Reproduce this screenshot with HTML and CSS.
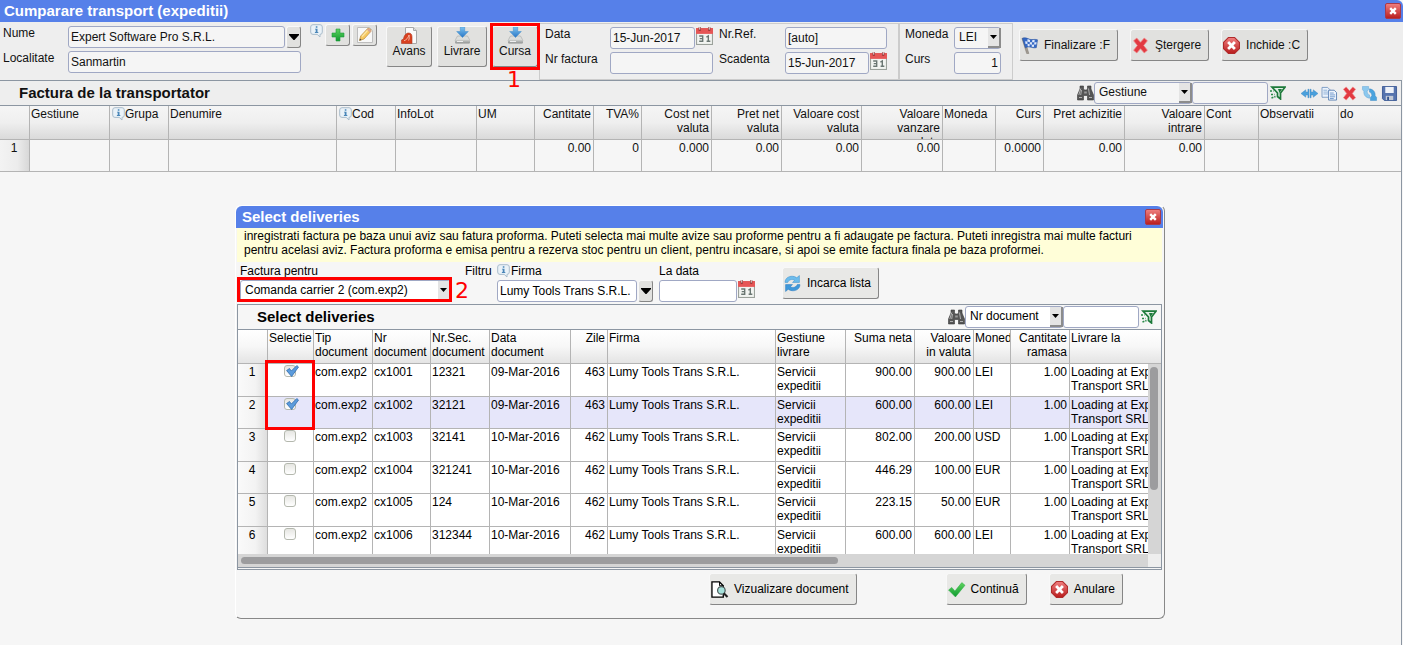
FILE: index.html
```html
<!DOCTYPE html>
<html lang="ro">
<head>
  <meta charset="UTF-8">
  <title>Cumparare transport (expeditii)</title>
  <link rel="stylesheet" href="styles.css">
</head>
<body>
  <!-- icons -->
  <svg class="sprite" aria-hidden="true">
    <defs>
      <linearGradient id="g-red" x1="0" y1="0" x2="0" y2="1"><stop offset="0" stop-color="#f08080"/><stop offset="1" stop-color="#b81c1c"/></linearGradient>
      <linearGradient id="g-green" x1="0" y1="0" x2="0" y2="1"><stop offset="0" stop-color="#5fd35f"/><stop offset="1" stop-color="#0f9a2f"/></linearGradient>
      <linearGradient id="g-blue" x1="0" y1="0" x2="0" y2="1"><stop offset="0" stop-color="#7cc4f2"/><stop offset="1" stop-color="#2a76c4"/></linearGradient>
      <linearGradient id="g-grey" x1="0" y1="0" x2="0" y2="1"><stop offset="0" stop-color="#d4d6d4"/><stop offset="1" stop-color="#8d908f"/></linearGradient>
    </defs>
    <symbol id="i-close" viewBox="0 0 16 16">
      <rect x=".5" y=".5" width="15" height="15" rx="1.5" fill="url(#g-red)" stroke="#a83a4a"/>
      <path d="M5.2 5.2l5.6 5.6M10.8 5.2l-5.6 5.6" stroke="#fff" stroke-width="2.4"/>
    </symbol>
    <symbol id="i-info" viewBox="0 0 13 14">
      <path d="M3 .7h7a2.3 2.3 0 0 1 2.3 2.3v5A2.3 2.3 0 0 1 10 10.4V13L7.2 10.4H3A2.3 2.3 0 0 1 .7 8V3A2.3 2.3 0 0 1 3 .7z" fill="#eaf2f8" stroke="#a9bccb"/>
      <path d="M5.8 2.2h1.6v1.6H5.8zM5 4.7h2.5v3.2h.8v1H4.9v-1h.8V5.6H5z" fill="#4a86b8"/>
    </symbol>
    <symbol id="i-plus" viewBox="0 0 16 16">
      <path d="M6 2h4v4h4v4h-4v4H6v-4H2V6h4z" fill="url(#g-green)" stroke="#1f9a3c" stroke-width=".6"/>
    </symbol>
    <symbol id="i-pencil" viewBox="0 0 16 16">
      <path d="M.5.5h12l3 3v12H.5z" fill="#f8f8f8" stroke="#bdbdbd"/>
      <path d="M2.500 13.500l1.200-4.500 7-7.500c1.200-.8 4 1.400 3.300 2.800L7 12z" fill="#f6c860" stroke="#b98a3a" stroke-width=".7"/>
      <path d="M2.500 13.500l.5-2 1.600 1.400z" fill="#444"/>
      <path d="M9.800 2.600l3.200 2.800 1-1.100c.5-1.400-2.200-3.400-3.300-2.800z" fill="#d9a58f"/>
      <path d="M5 9.500l5.500-6" stroke="#fbe6a8" stroke-width="1.200"/>
    </symbol>
    <symbol id="i-pdf" viewBox="0 0 17 17">
      <path d="M4.500.5h8l3 3v13h-11z" fill="#fafafa" stroke="#a8a8a8"/>
      <path d="M12.500.5v3h3" fill="#ddd" stroke="#a8a8a8"/>
      <path d="M.5 16.500v-3.500l2-1C3 8.500 5 6 7.500 6s3.500 1.500 3.500 4v6.500z" fill="#d8401f" stroke="#b03a22" stroke-width=".6"/>
      <path d="M3 13.800c2.500-1 4.300-3 5-5.800.6 2 .3 3.600-.4 5.500" fill="none" stroke="#f6c0ae" stroke-width=".9"/>
    </symbol>
    <symbol id="i-drive" viewBox="0 0 17 17">
      <path d="M3.500 9h10l2.500 4.500H1z" fill="#dcdedc" stroke="#a6a8a7" stroke-width=".6"/>
      <rect x="1" y="12.500" width="15" height="4" rx="1" fill="url(#g-grey)"/>
      <path d="M3 14.500h6" stroke="#eee"/>
      <path d="M6.300 0h4.400v4.500h3.600L8.500 10.500 2.700 4.500h3.600z" fill="url(#g-blue)" stroke="#3f8ccb" stroke-width=".5"/>
    </symbol>
    <symbol id="i-calendar" viewBox="0 0 16 17">
      <rect x=".5" y="1.500" width="15" height="15" fill="#f2f4f1" stroke="#9aa09a"/>
      <rect x="0" y="1" width="16" height="5.500" fill="#e65656"/>
      <path d="M3.500 0v3.500M12.500 0v3.500" stroke="#8c3030" stroke-width="2"/>
      <path d="M3.500 0v2.500M12.500 0v2.500" stroke="#eee" stroke-width=".9"/>
      <path d="M3 8.500h3.300v5H3M3.500 11h2.700M10 13.500h3.500M9.800 9.500l1.800-1v5" fill="none" stroke="#6a7672" stroke-width="1.300"/>
    </symbol>
    <symbol id="i-flag" viewBox="0 0 18 18">
      <path d="M1 1.500l2.300-.5 5 16.500H6z" fill="#a09a92" stroke="#77716a" stroke-width=".5"/>
      <path d="M1.500 1.500c4-2 6 1.300 10 1.200 2.500 0 4-.5 6 .3l-1.300 8.300c-3 .5-4.500-.3-6.500-.6-2-.4-3.500-.4-5 .8z" fill="#3568c4" stroke="#2450a0" stroke-width=".6"/>
      <path d="M7 2.200l2.600 1-.2 2.300-2.700-.8zM12 3.200h2.500l-.3 2.400h-2.500zM4.400 4.600l2.300.100.2 2.500-2.100.3zM9.400 5.500l2.300.1-.2 2.500-2.300-.3zM14.200 5.600h2.400l-.4 2.400h-2.300zM6.900 7.200l2.300.6-.1 2.300-2-.2zM11.500 8.100l2.400-.1-.3 2.600-2.300-.2z" fill="#dfe9fa"/>
    </symbol>
    <symbol id="i-delete" viewBox="0 0 16 16">
      <path d="M1.500 3.500L4.500 1 8 5l3.500-4 3 2.500L11 8l3.500 4.500-3 2.500L8 11l-3.500 4-3-2.500L5 8z" fill="#e23a42" stroke="#f08a8a" stroke-width=".7" stroke-linejoin="round"/>
    </symbol>
    <symbol id="i-cancel" viewBox="1 1 16 16">
      <path d="M6 1.500h6L16.500 6v6L12 16.500H6L1.500 12V6z" fill="url(#g-red)" stroke="#b02a2a" stroke-width="1" stroke-linejoin="round"/>
      <path d="M5.800 5.800l6.400 6.400M12.200 5.800l-6.400 6.400" stroke="#fff" stroke-width="2.600"/>
    </symbol>
    <symbol id="i-find" viewBox="0 0 17 16">
      <path d="M3 1h3.500v3l1 1h2l1-1V1H14v3l2.500 6v5h-6v-4.500h-4V15h-6v-5L3 4z" fill="#555" stroke="#3a3a3a" stroke-width=".6"/>
      <path d="M3.800 3.500L1.800 10M11.500 3.500l1 6.500M2 12.500h3M12 12.500h3M4.500 5l-.8 5" stroke="#b0b0b0" stroke-width="1"/>
      <path d="M7.200 6.500h2.600v2H7.200z" fill="#999"/>
    </symbol>
    <symbol id="i-filter" viewBox="0 0 16 14">
      <path d="M2 1.200h13L10.500 7v6L7.500 10.500V7z" fill="#e2efe6" stroke="#1d7a3a" stroke-width="1.700"/>
      <path d="M8 3l4 0-2.500 4z" fill="#1d7a3a"/>
      <path d="M0 5h3.500M1 8.500h3.500M1.500 12l4-1.500" stroke="#2a8a48" stroke-width="1.500" stroke-dasharray="2 1"/>
    </symbol>
    <symbol id="i-width" viewBox="0 0 16 10">
      <path d="M0 5l4.500-3.500v2H6.500V1h1v8h-1V6.500h-2v2zM16 5l-4.500-3.500v2H9.500V1h-1v8h1V6.500h2v2z" fill="#4aa0dc" stroke="#3a86c2" stroke-width=".4"/>
    </symbol>
    <symbol id="i-copy" viewBox="0 0 17 16">
      <path d="M.5 1.500h6l2.500 2.500v8H.5z" fill="#eaf2fb" stroke="#7c9cc4"/>
      <path d="M2 4.500h4M2 6.500h5M2 8.500h5" stroke="#8fb0d6"/>
      <path d="M7.500 4.500h6l2.500 2.500v8H7.500z" fill="#eef4fc" stroke="#5f84b6"/>
      <path d="M9 7.500h4M9 9.500h5.500M9 11.500h5.500M9 13.300h4" stroke="#6f98cc"/>
    </symbol>
    <symbol id="i-arrows" viewBox="0 0 16 16">
      <path d="M.5.5H7v3.500L5.500 5.500c0 2 1 3.500 2.500 4v3.500C4 12.500 1.500 9.500 2 5.500L.5 4z" fill="#8cc8ee" stroke="#5ba2d6" stroke-width=".5"/>
      <path d="M15.500 15.500H9V12l1.500-1.500c0-2-1-3.500-2.500-4V3c4 .5 6.500 3.500 6 7.500l1.500 1.500z" fill="#4aa3de" stroke="#3a86c2" stroke-width=".5"/>
    </symbol>
    <symbol id="i-save" viewBox="0 0 16 16">
      <path d="M.5.5h15v15h-13l-2-2z" fill="#5674ae" stroke="#3e5c96"/>
      <path d="M3.500 1h9v6.500h-9z" fill="#eef2f8"/>
      <path d="M4 10.500h8V15H4z" fill="#c3cad6"/>
      <path d="M5.500 11.500h2V15h-2z" fill="#34548e"/>
    </symbol>
    <symbol id="i-refresh" viewBox="0 0 16 16">
      <path d="M1 7C1 3 4.500 1 8 1.200c1.500 0 3 .5 4 1.400L14.500.5V7H8l2-2C7.500 3.500 4.500 4.500 3.500 7z" fill="#6cbcec" stroke="#3f90cc" stroke-width=".5"/>
      <path d="M15 9c0 4-3.500 6-7 5.800-1.500 0-3-.5-4-1.400L1.500 15.500V9H8l-2 2c2.500 1.500 5.500.5 6.500-2z" fill="#3f98da" stroke="#2f7cc0" stroke-width=".5"/>
    </symbol>
    <symbol id="i-preview" viewBox="0 0 18 18">
      <path d="M1 1h8l4 4v12H1z" fill="#fff" stroke="#000" stroke-width="1.400"/>
      <path d="M9 1v4h4" fill="none" stroke="#000"/>
      <circle cx="11" cy="10" r="4" fill="#a6e2dc" stroke="#4c5a5a" stroke-width="1.300"/>
      <path d="M13.500 13l4 4" stroke="#222" stroke-width="2.200"/>
    </symbol>
    <symbol id="i-ok" viewBox="0 0 17 16">
      <path d="M1 8.500L4 6l3 3.500L13.500 1.500 16.500 4 7.500 15z" fill="url(#g-green)" stroke="#2bab46" stroke-width=".5" stroke-linejoin="round"/>
    </symbol>
    <symbol id="i-tick" viewBox="0 0 13 12">
      <path d="M.6 5.500L3.500 3.500 5.300 6 10.800.5l1.700 1.500L5.600 11.500z" fill="#5b9bdc" stroke="#2f6cae" stroke-width=".8" stroke-linejoin="round"/>
    </symbol>
    <symbol id="i-down" viewBox="0 0 10 6"><path d="M0 0h10v1L5.500 6h-1L0 1z" fill="#000"/></symbol>
    <symbol id="i-down-small" viewBox="0 0 7 4"><path d="M0 0h7L3.500 4z" fill="#000"/></symbol>
  </svg>

  <main class="window">
    <header class="titlebar">
      <h1>Cumparare transport (expeditii)</h1>
      <button class="close" aria-label="Inchide"><svg><use href="#i-close"/></svg></button>
    </header>

    <div class="toolbar">
      <div class="fields party">
        <label for="nume">Nume</label>
        <div class="row"><input type="text" id="nume" value="Expert Software Pro S.R.L."><button class="drop" aria-label="Lista"><svg><use href="#i-down"/></svg></button></div>
        <label for="localitate">Localitate</label>
        <input type="text" id="localitate" value="Sanmartin">
      </div>
      <div class="small-buttons">
        <svg class="info"><use href="#i-info"/></svg>
        <button aria-label="Adauga"><svg><use href="#i-plus"/></svg></button>
        <button aria-label="Modifica"><svg><use href="#i-pencil"/></svg></button>
      </div>
      <div class="big-buttons">
        <button><svg><use href="#i-pdf"/></svg>Avans</button>
        <button class="wide"><svg><use href="#i-drive"/></svg>Livrare</button>
        <div class="marked">
          <button><svg><use href="#i-drive"/></svg>Cursa</button>
          <div class="mark mark-1"></div>
          <span class="mark-no no-1">1</span>
        </div>
      </div>
      <div class="fields doc">
        <label for="data">Data</label>
        <div class="row"><input type="text" id="data" value="15-Jun-2017"><svg class="cal"><use href="#i-calendar"/></svg></div>
        <label for="nrref">Nr.Ref.</label>
        <input type="text" id="nrref" value="[auto]">
        <label for="nrfactura">Nr factura</label>
        <input type="text" id="nrfactura">
        <label for="scadenta">Scadenta</label>
        <div class="row"><input type="text" id="scadenta" value="15-Jun-2017"><svg class="cal"><use href="#i-calendar"/></svg></div>
      </div>
      <div class="fields currency">
        <label for="moneda">Moneda</label>
        <div class="combo"><select id="moneda"><option>LEI</option></select><span class="arrow"><svg><use href="#i-down-small"/></svg></span></div>
        <label for="curs">Curs</label>
        <input type="text" id="curs" class="num" value="1">
      </div>
      <div class="actions">
        <button class="btn"><svg><use href="#i-flag"/></svg>Finalizare :F</button>
        <button class="btn"><svg><use href="#i-delete"/></svg>Ştergere</button>
        <button class="btn"><svg><use href="#i-cancel"/></svg>Inchide :C</button>
      </div>
    </div>

    <section class="panel invoice">
      <div class="panel-head">
        <h2>Factura de la transportator</h2>
        <svg class="find"><use href="#i-find"/></svg>
        <div class="combo"><select aria-label="Coloana"><option>Gestiune</option></select><span class="arrow"><svg><use href="#i-down-small"/></svg></span></div>
        <input type="text" class="search" aria-label="Cauta">
        <svg class="filter"><use href="#i-filter"/></svg>
        <div class="tools">
          <svg><use href="#i-width"/></svg>
          <svg><use href="#i-copy"/></svg>
          <svg><use href="#i-delete"/></svg>
          <svg><use href="#i-arrows"/></svg>
          <svg><use href="#i-save"/></svg>
        </div>
      </div>
      <table>
        <colgroup><col><col><col><col><col><col><col><col><col><col><col><col><col><col><col><col><col><col><col><col></colgroup>
        <thead>
          <tr>
            <th></th>
            <th>Gestiune</th>
            <th><svg class="info"><use href="#i-info"/></svg>Grupa</th>
            <th>Denumire</th>
            <th><svg class="info"><use href="#i-info"/></svg>Cod</th>
            <th>InfoLot</th>
            <th>UM</th>
            <th class="num">Cantitate</th>
            <th class="num">TVA%</th>
            <th class="num">Cost net<br>valuta</th>
            <th class="num">Pret net<br>valuta</th>
            <th class="num">Valoare cost<br>valuta</th>
            <th class="num"><div class="clip">Valoare<br>vanzare<br>valuta</div></th>
            <th>Moneda</th>
            <th class="num">Curs</th>
            <th class="num">Pret achizitie</th>
            <th class="num">Valoare<br>intrare</th>
            <th>Cont</th>
            <th>Observatii</th>
            <th>do</th>
          </tr>
        </thead>
        <tbody>
          <tr>
            <td>1</td><td></td><td></td><td></td><td></td><td></td><td></td>
            <td class="num">0.00</td><td class="num">0</td><td class="num">0.000</td><td class="num">0.00</td><td class="num">0.00</td><td class="num">0.00</td>
            <td></td>
            <td class="num">0.0000</td><td class="num">0.00</td><td class="num">0.00</td>
            <td></td><td></td><td></td>
          </tr>
        </tbody>
      </table>
    </section>
  </main>

  <div class="dialog" role="dialog" aria-label="Select deliveries">
    <header class="titlebar">
      <h1>Select deliveries</h1>
      <button class="close" aria-label="Inchide"><svg><use href="#i-close"/></svg></button>
    </header>
    <p class="note">inregistrati factura pe baza unui aviz sau fatura proforma. Puteti selecta mai multe avize sau proforme pentru a fi adaugate pe factura. Puteti inregistra mai multe facturi pentru acelasi aviz. Factura proforma e emisa pentru a rezerva stoc pentru un client, pentru incasare, si apoi se emite factura finala pe baza proformei.</p>

    <div class="criteria">
      <div class="kind">
        <label for="tip">Factura pentru</label>
        <div class="combo"><select id="tip"><option>Comanda carrier 2 (com.exp2)</option></select><span class="arrow"><svg><use href="#i-down-small"/></svg></span></div>
        <div class="mark mark-2"></div>
        <span class="mark-no no-2">2</span>
      </div>
      <span class="caption">Filtru</span>
      <div class="firm">
        <label for="firma"><svg class="info"><use href="#i-info"/></svg>Firma</label>
        <div class="row"><input type="text" id="firma" value="Lumy Tools Trans S.R.L."><button class="drop" aria-label="Lista"><svg><use href="#i-down"/></svg></button></div>
      </div>
      <div class="until">
        <label for="ladata">La data</label>
        <div class="row"><input type="text" id="ladata"><svg class="cal"><use href="#i-calendar"/></svg></div>
      </div>
      <button class="btn"><svg><use href="#i-refresh"/></svg>Incarca lista</button>
    </div>

    <section class="panel deliveries">
      <div class="panel-head">
        <h2>Select deliveries</h2>
        <svg class="find"><use href="#i-find"/></svg>
        <div class="combo"><select aria-label="Coloana"><option>Nr document</option></select><span class="arrow"><svg><use href="#i-down-small"/></svg></span></div>
        <input type="text" class="search" aria-label="Cauta">
        <svg class="filter"><use href="#i-filter"/></svg>
      </div>
      <table>
        <colgroup><col><col><col><col><col><col><col><col><col><col><col><col><col><col></colgroup>
        <thead>
          <tr>
            <th></th>
            <th>Selectie</th>
            <th>Tip<br>document</th>
            <th>Nr<br>document</th>
            <th>Nr.Sec.<br>document</th>
            <th>Data<br>document</th>
            <th class="num">Zile</th>
            <th>Firma</th>
            <th>Gestiune<br>livrare</th>
            <th class="num">Suma neta</th>
            <th class="num">Valoare<br>in valuta</th>
            <th>Moneda</th>
            <th class="num">Cantitate<br>ramasa</th>
            <th>Livrare la</th>
          </tr>
        </thead>
      </table>
      <div class="body">
        <div class="rows">
          <table>
            <colgroup><col><col><col><col><col><col><col><col><col><col><col><col><col><col></colgroup>
            <tbody></tbody>
          </table>
        </div>
        <div class="vscroll"><div class="thumb"></div></div>
      </div>
      <div class="hscroll"><div class="thumb"></div></div>
      <div class="mark mark-3"></div>
    </section>

    <footer class="dialog-foot">
      <button class="btn"><svg><use href="#i-preview"/></svg>Vizualizare document</button>
      <button class="btn"><svg><use href="#i-ok"/></svg>Continuă</button>
      <button class="btn"><svg><use href="#i-cancel"/></svg>Anulare</button>
    </footer>
  </div>

  <script>
    var data = [
      { nr: 'cx1001', sec: '12321', date: '09-Mar-2016', days: 463, sum: '900.00', value: '900.00', currency: 'LEI', checked: true },
      { nr: 'cx1002', sec: '32121', date: '09-Mar-2016', days: 463, sum: '600.00', value: '600.00', currency: 'LEI', checked: true },
      { nr: 'cx1003', sec: '32141', date: '10-Mar-2016', days: 462, sum: '802.00', value: '200.00', currency: 'USD' },
      { nr: 'cx1004', sec: '321241', date: '10-Mar-2016', days: 462, sum: '446.29', value: '100.00', currency: 'EUR' },
      { nr: 'cx1005', sec: '124', date: '10-Mar-2016', days: 462, sum: '223.15', value: '50.00', currency: 'EUR' },
      { nr: 'cx1006', sec: '312344', date: '10-Mar-2016', days: 462, sum: '600.00', value: '600.00', currency: 'LEI' }
    ];
    var tbody = document.querySelector('.rows tbody');

    data.forEach(function (row, i) {
      var tr = document.createElement('tr');
      // the current row
      if (i === 1) {
        tr.className = 'current';
      }
      tr.innerHTML = '<td>' + (i + 1) + '</td>' +
        '<td><label class="check"><input type="checkbox" aria-label="' + row.nr + '"' + (row.checked ? ' checked' : '') + '><svg><use href="#i-tick"/></svg></label></td>' +
        '<td>com.exp2</td>' +
        '<td>' + row.nr + '</td>' +
        '<td>' + row.sec + '</td>' +
        '<td>' + row.date + '</td>' +
        '<td class="num">' + row.days + '</td>' +
        '<td>Lumy Tools Trans S.R.L.</td>' +
        '<td>Servicii<br>expeditii</td>' +
        '<td class="num">' + row.sum + '</td>' +
        '<td class="num">' + row.value + '</td>' +
        '<td>' + row.currency + '</td>' +
        '<td class="num">1.00</td>' +
        '<td>Loading at Expert<br>Transport SRL</td>';
      tbody.appendChild(tr);
    });
  </script>
</body>
</html>
```

FILE: styles.css
```css
* {
  box-sizing: border-box;
  margin: 0;
  padding: 0;
}
body {
  position: relative;
  min-height: 100vh;
  background: #f6f6f6;
  color: #111;
  font: 12px/14px "Liberation Sans", Arial, sans-serif;
}
svg {
  display: block;
  flex: none;
}
.sprite {
  position: absolute;
  width: 0;
  height: 0;
}
input, select, button {
  font: inherit;
  color: inherit;
}
input[type="text"] {
  width: 100%;
  min-width: 0;
  height: 22px;
  padding: 0 2px;
  border: 1px solid #a0a8c4;
  border-radius: 3px;
  background: #f5f5f5;
}
input.num {
  text-align: right;
}
button {
  display: flex;
  align-items: center;
  border: 1px solid #f8f8f8;
  border-right-color: #868686;
  border-bottom-color: #868686;
  border-radius: 3px;
  background: #e1e1df;
  white-space: nowrap;
}
.btn {
  gap: 5px;
  height: 32px;
  padding: 0 7px 0 0;
}
.btn svg {
  width: 19px;
  height: 17px;
}
.row {
  display: flex;
  gap: 1px;
}
.drop {
  flex: none;
  justify-content: center;
  width: 15px;
  height: 22px;
}
.drop svg {
  width: 10px;
  height: 6px;
}
.cal {
  width: 17px;
  height: 18px;
}
.info {
  width: 13px;
  height: 14px;
}

/* drop-down */
.combo {
  position: relative;
  height: 22px;
}
.combo select {
  display: block;
  width: 100%;
  height: 22px;
  padding: 0 4px 2px;
  border: 1px solid #a0a8c4;
  border-radius: 3px;
  background: #f5f5f5;
  appearance: none;
}
.combo .arrow {
  position: absolute;
  top: 1px;
  right: 0;
  display: flex;
  align-items: center;
  justify-content: center;
  width: 13px;
  height: 20px;
  border: solid #8c8c8c;
  border-width: 0 2px 2px 0;
  background: #e4e4e4;
  pointer-events: none;
}
.combo .arrow svg {
  width: 7px;
  height: 4px;
}

/* title bars */
.titlebar {
  display: flex;
  align-items: center;
  justify-content: space-between;
  height: 22px;
  padding: 0 2px 0 4px;
  border-radius: 0 6px 0 0;
  background: #5680e9;
  color: #fff;
}
h1, h2 {
  font-size: 15px;
  line-height: 22px;
  font-weight: bold;
}
.close {
  border: 0;
  background: none;
}
.close svg {
  width: 16px;
  height: 16px;
}

/* main window */
.window {
  display: flex;
  flex-direction: column;
  min-height: 100vh;
}
.toolbar {
  display: flex;
  align-items: flex-start;
  height: 58px;
  background: #eee;
}
.fields {
  display: grid;
  grid-auto-rows: 22px;
  row-gap: 3px;
}
.party {
  grid-template-columns: 65px 233px;
  padding: 4px 0 0 3px;
}
.small-buttons {
  display: flex;
  gap: 2px;
  margin: 2px 9px 0;
}
.small-buttons button {
  justify-content: center;
  width: 25px;
  height: 22px;
}
.small-buttons button svg {
  width: 16px;
  height: 16px;
}
.big-buttons {
  display: flex;
  gap: 5px;
  margin-top: 4px;
}
.big-buttons button {
  flex-direction: column;
  width: 46px;
  height: 41px;
}
.big-buttons .wide {
  width: 50px;
}
.big-buttons svg {
  width: 17px;
  height: 17px;
}
.doc {
  grid-template-columns: 65px 103px 72px 102px;
  margin-left: 1px;
}
.doc > :nth-child(4n + 3) {
  padding-left: 6px;
}
.currency {
  grid-template-columns: 49px 47px;
}
.doc, .currency {
  height: 57px;
  margin-top: 1px;
  padding: 3px 11px 0 5px;
  border: 1px solid #ccc;
}
.actions {
  display: flex;
  gap: 12px;
  margin: 7px 0 0 6px;
}

/* grids */
.panel {
  border: 1px solid #8c96a2;
}
.invoice {
  flex: 1;
  margin-right: 1px;
  border-width: 1px 1px 0 0;
}
.panel-head {
  display: flex;
  align-items: center;
  height: 25px;
  padding-left: 19px;
  border-bottom: 1px solid #8c96a2;
  background: #eee;
}
.panel-head h2 {
  flex: 1;
}
.panel-head .combo {
  width: 98px;
}
.panel-head .search {
  width: 76px;
}
.find {
  width: 17px;
  height: 16px;
}
.filter {
  width: 16px;
  height: 14px;
  margin: 0 4px 0 2px;
}
.tools {
  display: flex;
  align-items: center;
  gap: 3px;
  margin: 0 3px 0 11px;
}
.tools svg {
  width: 17px;
  height: 15px;
}
table {
  width: 100%;
  table-layout: fixed;
  border-collapse: separate;
  border-spacing: 0;
}
th, td {
  padding: 1px 2px 0 1px;
  border-right: 1px solid #b4b4b4;
  border-bottom: 1px solid #b4b4b4;
  overflow: hidden;
  font-weight: normal;
  text-align: left;
  vertical-align: top;
  white-space: nowrap;
}
th {
  height: 34px;
  background: linear-gradient(#f5f5f5, #efefef 50%, #dadada);
}
th:last-child, td:last-child {
  border-right: 0;
}
td:first-child {
  text-align: center;
  background: linear-gradient(to right, #f3f3f3, #ececec 60%, #d8d8d8);
}
th.num, td.num {
  text-align: right;
}
th .info {
  display: inline-block;
  margin-left: 1px;
  vertical-align: top;
}
.clip {
  height: 32px;
  overflow: hidden;
}
.invoice td {
  height: 32px;
}
.invoice col { width: 80px; }
.invoice col:nth-child(1) { width: 30px; }
.invoice col:nth-child(3) { width: 59px; }
.invoice col:nth-child(4) { width: 168px; }
.invoice col:nth-child(5) { width: 59px; }
.invoice col:nth-child(6) { width: 81px; }
.invoice col:nth-child(7) { width: 58px; }
.invoice col:nth-child(8) { width: 59px; }
.invoice col:nth-child(9) { width: 48px; }
.invoice col:nth-child(10),
.invoice col:nth-child(11) { width: 70px; }
.invoice col:nth-child(13) { width: 81px; }
.invoice col:nth-child(14) { width: 53px; }
.invoice col:nth-child(15) { width: 48px; }
.invoice col:nth-child(16) { width: 81px; }
.invoice col:nth-child(18) { width: 54px; }
.invoice col:last-child { width: auto; }

/* dialog */
.dialog {
  position: absolute;
  top: 205px;
  left: 235px;
  right: 238px;
  border: 1px solid #fff;
  border-right-color: #888;
  border-bottom-color: #888;
  border-radius: 6px;
  background: #f6f6f6;
  color: #000;
}
.dialog .titlebar {
  margin-right: 1px;
  padding-left: 6px;
  border-radius: 6px 6px 0 0;
}
.dialog .btn {
  background: #e8e8e6;
}
.dialog input[type="text"], .dialog select {
  background: #fff;
}
.note {
  height: 34px;
  margin: 0 2px 0 1px;
  padding: 1px 8px 0 7px;
  background: #fffed8;
}
.criteria {
  display: flex;
  height: 42px;
  padding: 2px 0 0 4px;
}
.criteria label {
  display: flex;
  gap: 1px;
  height: 16px;
}
.kind {
  position: relative;
  width: 225px;
}
.kind .combo {
  width: 211px;
}
.criteria .caption {
  width: 32px;
}
.firm {
  width: 156px;
  margin-right: 6px;
}
.until {
  width: 96px;
}
.criteria .btn {
  margin: 3px 0 0 27px;
}
.deliveries {
  position: relative;
  margin: 0 2px 0 1px;
  border-bottom: 3px double #8c96a2;
}
.deliveries .panel-head {
  background: #f6f6f6;
}
.deliveries th {
  background: linear-gradient(#fff, #f7f7f7 50%, #e4e4e4);
}
.deliveries td:first-child {
  background: linear-gradient(to right, #fafafa, #f3f3f3 60%, #dedede);
}
.deliveries col:nth-child(1) { width: 30px; }
.deliveries col:nth-child(2) { width: 46px; }
.deliveries col:nth-child(3) { width: 59px; }
.deliveries col:nth-child(4) { width: 58px; }
.deliveries col:nth-child(5) { width: 59px; }
.deliveries col:nth-child(6) { width: 81px; }
.deliveries col:nth-child(7) { width: 37px; }
.deliveries col:nth-child(8) { width: 168px; }
.deliveries col:nth-child(9) { width: 70px; }
.deliveries col:nth-child(10) { width: 69px; }
.deliveries col:nth-child(11) { width: 59px; }
.deliveries col:nth-child(12) { width: 37px; }
.deliveries col:nth-child(13) { width: 59px; }
.body {
  display: flex;
  height: 190px;
}
.rows {
  flex: 1;
  overflow: hidden;
  background: #fff;
}
.rows td {
  height: 33px;
}
.rows tr:nth-child(even) td {
  height: 32px;
}
.rows .current td:not(:first-child) {
  background: #e6e6fa;
}
.check {
  position: relative;
  display: block;
  width: 12px;
  height: 12px;
  margin: 0 auto;
}
.check input {
  display: block;
  width: 12px;
  height: 12px;
  border: 1px solid #b4b8ae;
  border-radius: 3px;
  background: linear-gradient(#e6e6e2, #fff);
  appearance: none;
}
.check svg {
  position: absolute;
  top: 0;
  left: 2px;
  display: none;
  width: 13px;
  height: 12px;
}
.check input:checked + svg {
  display: block;
}
.vscroll {
  width: 13px;
  padding: 3px 3px 0 2px;
  background: #d5d5d5;
}
.vscroll .thumb {
  width: 8px;
  height: 123px;
}
.hscroll {
  height: 13px;
  padding: 3px;
  border-right: 13px solid #eee;
  background: #d5d5d5;
}
.hscroll .thumb {
  width: 66%;
  height: 7px;
}
.thumb {
  border-radius: 4px;
  background: #9c9c9e;
}
.dialog-foot {
  display: flex;
  justify-content: flex-end;
  height: 48px;
  padding: 3px 41px 0 0;
}
.dialog-foot .btn:nth-child(2) {
  margin: 0 22px 0 89px;
}

/* red marks over the form */
.marked {
  position: relative;
}
.mark {
  position: absolute;
  border: 3px solid #f00;
  pointer-events: none;
}
.mark-no {
  position: absolute;
  color: #f00;
  font: 22px/22px "DejaVu Sans", sans-serif;
}
.mark-1 {
  top: -3px;
  left: -2px;
  width: 50px;
  height: 47px;
}
.no-1 {
  top: 43px;
  left: 15px;
}
.mark-2 {
  top: 13px;
  left: -3px;
  width: 215px;
  height: 25px;
}
.no-2 {
  top: 16px;
  left: 215px;
}
.mark-3 {
  top: 55px;
  left: 27px;
  width: 50px;
  height: 70px;
}
```
